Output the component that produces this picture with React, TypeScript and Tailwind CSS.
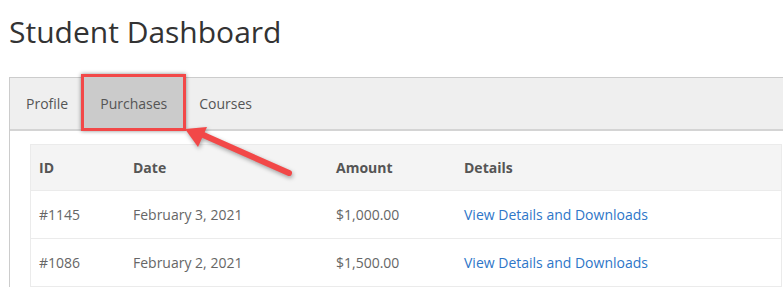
const rows = [
  { id: "#1145", date: "February 3, 2021", amount: "$1,000.00" },
  { id: "#1086", date: "February 2, 2021", amount: "$1,500.00" },
];

const tabs = ["Profile", "Purchases", "Courses"];

export default function App() {
  return (
    <div
      className="relative w-[783px] h-[287px] overflow-hidden bg-white"
      style={{ fontFamily: "'Open Sans', sans-serif" }}
    >
      <h1 className="ml-[9px] pt-[11px] text-[30px] leading-[41px] font-normal text-[#333]">
        Student Dashboard
      </h1>

      <div className="ml-[9px] mt-[25px] w-[820px] border-l border-t border-[#ccc]">
        {/* tab bar */}
        <div className="flex h-[53px] bg-[#efefef] border-b-2 border-[#d4d4d4] text-[14px] text-[#555]">
          {tabs.map((t) => (
            <div
              key={t}
              className={
                "flex items-center px-4 " +
                (t === "Purchases" ? "bg-[#cbcbcb]" : "")
              }
            >
              {t}
            </div>
          ))}
        </div>

        {/* content */}
        <div className="pl-5 pt-[13px]">
          <div className="w-[752px] border border-[#ebebeb] text-[14px]">
            <div className="grid grid-cols-[94px_203px_128px_1fr] h-[45px] items-center bg-[#f4f4f4] font-bold text-[#555]">
              <div className="pl-2">ID</div>
              <div className="pl-2">Date</div>
              <div className="pl-2">Amount</div>
              <div className="pl-2">Details</div>
            </div>
            {rows.map((r) => (
              <div
                key={r.id}
                className="grid grid-cols-[94px_203px_128px_1fr] h-[48px] items-center border-t border-[#ebebeb] text-[#666]"
              >
                <div className="pl-2">{r.id}</div>
                <div className="pl-2">{r.date}</div>
                <div className="pl-2">{r.amount}</div>
                <div className="pl-2">
                  <a className="text-[#2e76c8]" href="#">
                    View Details and Downloads
                  </a>
                </div>
              </div>
            ))}
          </div>
        </div>
      </div>

      {/* annotation: red highlight box */}
      <div className="absolute left-[81px] top-[74px] w-[105px] h-[57px] border-[3px] border-[#f24848] shadow-[0_0_4px_rgba(0,0,0,0.45)]" />

      {/* annotation: arrow */}
      <svg
        className="absolute left-0 top-0"
        width="783"
        height="287"
        style={{ filter: "drop-shadow(1px 2px 2px rgba(0,0,0,0.35))" }}
      >
        <line
          x1="201"
          y1="134"
          x2="289"
          y2="173"
          stroke="#f24848"
          strokeWidth="6"
          strokeLinecap="round"
        />
        <polygon points="185,129 207,127 198,147" fill="#f24848" />
      </svg>
    </div>
  );
}
